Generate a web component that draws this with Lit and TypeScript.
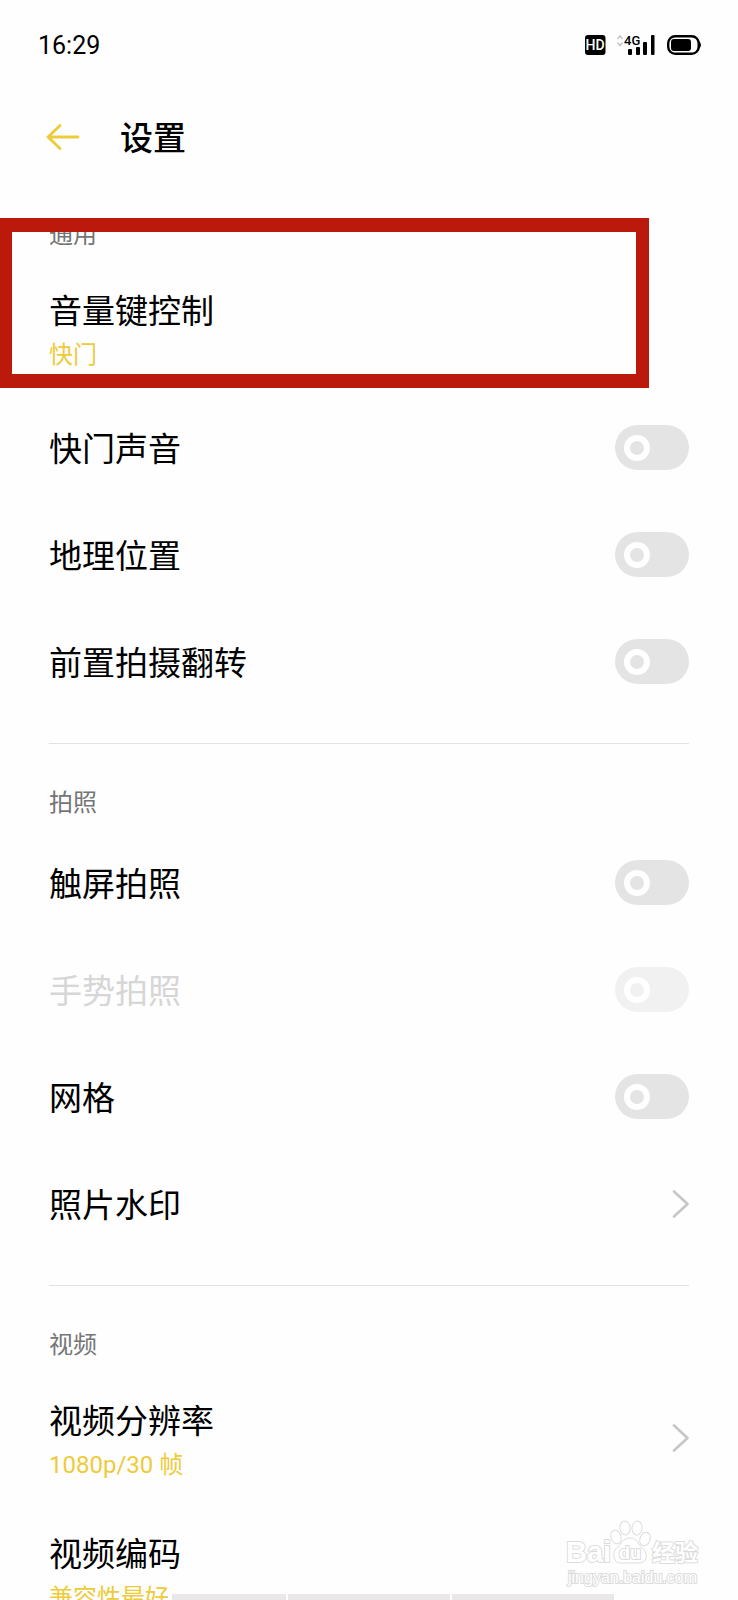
import { LitElement, html, css, svg, nothing } from "lit";
import { customElement, property } from "lit/decorators.js";

interface Item {
  id: string;
  title: string;
  value?: string;
  kind: "toggle" | "link" | "plain";
  disabled?: boolean;
}

interface Section {
  name: string;
  items: Item[];
}

const SECTIONS: Section[] = [
  {
    name: "通用",
    items: [
      { id: "volume", title: "音量键控制", value: "快门", kind: "plain" },
      { id: "sound", title: "快门声音", kind: "toggle" },
      { id: "location", title: "地理位置", kind: "toggle" },
      { id: "mirror", title: "前置拍摄翻转", kind: "toggle" },
    ],
  },
  {
    name: "拍照",
    items: [
      { id: "touch", title: "触屏拍照", kind: "toggle" },
      { id: "gesture", title: "手势拍照", kind: "toggle", disabled: true },
      { id: "grid", title: "网格", kind: "toggle" },
      { id: "watermark", title: "照片水印", kind: "link" },
    ],
  },
  {
    name: "视频",
    items: [
      { id: "resolution", title: "视频分辨率", value: "1080p/30 帧", kind: "link" },
      { id: "codec", title: "视频编码", value: "兼容性最好", kind: "plain" },
    ],
  },
];

@customElement("status-bar")
export class StatusBar extends LitElement {
  static styles = css`
    :host {
      display: flex;
      align-items: center;
      justify-content: space-between;
      height: 90px;
      padding: 0 36px 0 38px;
      box-sizing: border-box;
      color: #000;
    }
    .time {
      font-size: 25px;
      line-height: 30px;
      padding-top: 2px;
    }
    .icons {
      display: flex;
      align-items: center;
      gap: 10px;
    }
    .label {
      font-family: "Roboto", sans-serif;
      font-weight: 500;
    }
  `;

  render() {
    return html`
      <span class="time">16:29</span>
      <div class="icons">
        <svg width="22" height="22" viewBox="0 0 22 22" role="img" aria-label="HD">
          <rect x="1" y="1" width="20.500" height="20" rx="3" fill="#000" />
          <text class="label" x="11" y="16" font-size="14" text-anchor="middle" fill="#fff">HD</text>
        </svg>
        <svg width="40" height="22" viewBox="0 0 40 22" role="img" aria-label="4G">
          <path d="M1.500 5 L4 2 L6.500 5 M1.500 8.500 L4 11.500 L6.500 8.500" fill="none" stroke="#c4c4c4" stroke-width="1.500" />
          <text class="label" x="8" y="11" font-size="13" fill="#000">4G</text>
          <rect x="12" y="15" width="4" height="6" rx="1" />
          <rect x="20" y="13" width="4" height="8" rx="1" />
          <rect x="27" y="8" width="4" height="13" rx="1" />
          <rect x="35" y="1" width="3.500" height="20" rx="1" />
        </svg>
        <svg width="36" height="22" viewBox="0 0 36 22" role="img" aria-label="电池">
          <rect x="2.200" y="2.200" width="30.500" height="17.600" rx="7" fill="none" stroke="#000" stroke-width="2.400" />
          <rect x="5" y="5" width="20" height="12" rx="3" />
          <path d="M33 7 Q37 11 33 15 Z" />
        </svg>
      </div>
    `;
  }
}

@customElement("setting-row")
export class SettingRow extends LitElement {
  @property({ attribute: false }) item!: Item;

  static styles = css`
    :host {
      display: block;
    }
    .row {
      display: flex;
      align-items: center;
      justify-content: space-between;
      box-sizing: border-box;
      width: 100%;
      min-height: 107px;
      padding: 0;
      border: 0;
      background: none;
      color: #000;
      font: inherit;
      text-align: left;
      text-decoration: none;
    }
    .row.tall {
      min-height: 133px;
    }
    .row.disabled {
      color: #d6d6d6;
    }
    .text {
      display: flex;
      flex-direction: column;
      gap: 2px;
      padding-top: 4px;
    }
    .title {
      font-size: 33px;
      line-height: 48px;
    }
    .value {
      font-size: 24px;
      line-height: 34px;
      color: #eecb3a;
    }
    .switch {
      appearance: none;
      display: flex;
      align-items: center;
      flex: none;
      width: 74px;
      height: 45px;
      margin: 0;
      padding: 0 9px;
      box-sizing: border-box;
      border-radius: 23px;
      background: #e4e4e4;
    }
    .switch::before {
      content: "";
      width: 26px;
      height: 26px;
      box-sizing: border-box;
      border: 6px solid #fff;
      border-radius: 50%;
    }
    .switch:checked {
      justify-content: flex-end;
      background: #eecb3a;
    }
    .switch:disabled {
      background: #f1f1f1;
    }
    .chevron {
      flex: none;
    }
  `;

  private renderText() {
    const { title, value } = this.item;
    return html`
      <span class="text">
        <span class="title">${title}</span>
        ${value ? html`<span class="value">${value}</span>` : nothing}
      </span>
    `;
  }

  render() {
    const { id, kind, value, disabled } = this.item;
    if (kind === "toggle") {
      return html`
        <label class="row ${disabled ? "disabled" : ""}" for=${id}>
          ${this.renderText()}
          <input class="switch" id=${id} type="checkbox" role="switch" ?disabled=${!!disabled} />
        </label>
      `;
    }
    return html`
      <button class="row ${value ? "tall" : ""}" type="button">
        ${this.renderText()}
        ${kind === "link"
          ? html`<svg class="chevron" width="18" height="30" viewBox="0 0 18 30" aria-hidden="true">
              <path d="M3 2.500 L16.500 15 L3 27.500" fill="none" stroke="#c6c6c6" stroke-width="2.600" stroke-linecap="round" stroke-linejoin="round" />
            </svg>`
          : nothing}
      </button>
    `;
  }
}

@customElement("baidu-mark")
export class BaiduMark extends LitElement {
  static styles = css`
    :host {
      display: block;
    }
    svg {
      display: block;
    }
    .shape,
    .word {
      fill: #fff;
      stroke: #dcdcdc;
      stroke-width: 1;
    }
    .word {
      stroke-width: 2;
      paint-order: stroke;
      font-weight: 700;
    }
    .latin {
      font-family: "Liberation Sans", sans-serif;
      font-size: 29px;
    }
    .du {
      font-family: "Liberation Sans", sans-serif;
      font-size: 18px;
    }
    .han {
      font-family: "Noto Sans CJK SC", sans-serif;
      font-size: 23px;
    }
    .site {
      font-family: "Liberation Sans", sans-serif;
      font-size: 16px;
      font-weight: 400;
    }
  `;

  render() {
    const toes = [
      [50, 17, -18],
      [59, 8, -5],
      [71, 8, 5],
      [79, 19, 20],
    ];
    return html`
      <svg width="134" height="68" viewBox="0 0 134 68" role="img" aria-label="Baidu 经验 jingyan.baidu.com">
        <text class="word latin" x="0" y="42">Bai</text>
        <path class="shape" d="M64 18 C57 18 56 23 52 27 C46 31 46 43 55 43 H73 C82 43 82 32 76 28 C72 24 71 18 64 18 Z" />
        ${toes.map(
          ([x, y, r]) =>
            svg`<ellipse class="shape" cx=${x} cy=${y} rx="5" ry="7" transform="rotate(${r} ${x} ${y})" />`
        )}
        <text class="word du" x="53" y="39">du</text>
        <text class="word han" x="86" y="41">经验</text>
        <text class="word site" x="2" y="63">jingyan.baidu.com</text>
      </svg>
    `;
  }
}

@customElement("app-root")
export class AppRoot extends LitElement {
  static styles = css`
    :host {
      display: flex;
      flex-direction: column;
      position: relative;
      height: 100vh;
      overflow: hidden;
      background: #fefefe;
      font-family: "Roboto", "Noto Sans CJK SC", sans-serif;
    }
    .appbar {
      display: flex;
      align-items: center;
      flex: none;
      height: 86px;
      gap: 38px;
      padding: 8px 46px 0;
      box-sizing: border-box;
    }
    .back {
      display: flex;
      padding: 0;
      border: 0;
      background: none;
    }
    .heading {
      margin: 0;
      padding-top: 4px;
      font-size: 33px;
      line-height: 48px;
      font-weight: 500;
      color: #000;
    }
    .list {
      flex: 1;
      min-height: 0;
      overflow: hidden auto;
      scrollbar-width: none;
      padding: 0 49px;
    }
    .section + .section {
      margin-top: 28px;
      border-top: 1px solid #e2e2e2;
    }
    .name {
      margin: 0;
      padding: 42px 0 9px;
      font-size: 24px;
      line-height: 34px;
      font-weight: 400;
      color: #757575;
    }
    .highlight {
      position: absolute;
      top: 218px;
      left: 0;
      right: 89px;
      height: 170px;
      box-sizing: border-box;
      border: 14px solid #bb190b;
      border-width: 14px 13px 14px 12px;
      pointer-events: none;
    }
    .mark {
      position: absolute;
      right: 38px;
      bottom: 12px;
      pointer-events: none;
    }
    .strip {
      position: absolute;
      left: 172px;
      right: 124px;
      bottom: 0;
      display: grid;
      grid-template-columns: 114px 162px 1fr;
      gap: 2px;
      height: 6px;
      pointer-events: none;
    }
    .cell {
      background: #e9e7e8;
    }
  `;

  render() {
    return html`
      <status-bar></status-bar>
      <header class="appbar">
        <button class="back" type="button" aria-label="返回">
          <svg width="36" height="28" viewBox="0 0 36 28" aria-hidden="true">
            <path d="M32 14 H2 M14 2.500 L2 14 L14 25.500" fill="none" stroke="#eecb3a" stroke-width="2.800" stroke-linecap="round" stroke-linejoin="round" />
          </svg>
        </button>
        <h1 class="heading">设置</h1>
      </header>
      <main class="list">
        ${SECTIONS.map(
          (s) => html`
            <section class="section">
              <h2 class="name">${s.name}</h2>
              ${s.items.map((i) => html`<setting-row .item=${i}></setting-row>`)}
            </section>
          `
        )}
      </main>
      <div class="highlight"></div>
      <div class="strip"><span class="cell"></span><span class="cell"></span><span class="cell"></span></div>
      <baidu-mark class="mark"></baidu-mark>
    `;
  }
}
